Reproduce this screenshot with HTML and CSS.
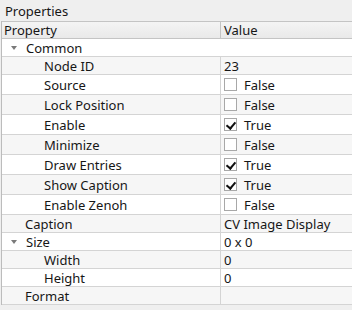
FILE: index.html
```html
<!DOCTYPE html>
<html lang="en">

<head>
    <meta charset="UTF-8">
    <title>Properties</title>
    <link rel="stylesheet" href="styles.css">
</head>

<body>
    <div class="panel">
        <div class="panel-title">Properties</div>
        <div class="browser">
            <div class="row header">
                <div class="cell name">Property</div>
                <div class="cell value">Value</div>
            </div>

            <div class="row group">
                <div class="cell name lvl0"><span class="arrow"></span>Common</div>
            </div>
            <div class="row alt">
                <div class="cell name lvl1">Node ID</div>
                <div class="cell value">23</div>
            </div>
            <div class="row check">
                <div class="cell name lvl1">Source</div>
                <div class="cell value"><span class="box"></span>False</div>
            </div>
            <div class="row check alt">
                <div class="cell name lvl1">Lock Position</div>
                <div class="cell value"><span class="box"></span>False</div>
            </div>
            <div class="row check">
                <div class="cell name lvl1">Enable</div>
                <div class="cell value"><span class="box on"></span>True</div>
            </div>
            <div class="row check alt">
                <div class="cell name lvl1">Minimize</div>
                <div class="cell value"><span class="box"></span>False</div>
            </div>
            <div class="row check">
                <div class="cell name lvl1">Draw Entries</div>
                <div class="cell value"><span class="box on"></span>True</div>
            </div>
            <div class="row check alt">
                <div class="cell name lvl1">Show Caption</div>
                <div class="cell value"><span class="box on"></span>True</div>
            </div>
            <div class="row check">
                <div class="cell name lvl1">Enable Zenoh</div>
                <div class="cell value"><span class="box"></span>False</div>
            </div>
            <div class="row alt">
                <div class="cell name lvl0 plain">Caption</div>
                <div class="cell value">CV Image Display</div>
            </div>
            <div class="row">
                <div class="cell name lvl0"><span class="arrow"></span>Size</div>
                <div class="cell value">0 x 0</div>
            </div>
            <div class="row alt">
                <div class="cell name lvl1">Width</div>
                <div class="cell value">0</div>
            </div>
            <div class="row">
                <div class="cell name lvl1">Height</div>
                <div class="cell value">0</div>
            </div>
            <div class="row alt">
                <div class="cell name lvl0 plain">Format</div>
                <div class="cell value"></div>
            </div>
        </div>
    </div>
</body>

</html>
```

FILE: styles.css
```css
* {
    margin: 0;
    padding: 0;
    box-sizing: border-box;
}

body {
    font-family: 'Noto Sans', sans-serif;
    font-size: 13px;
    color: #161616;
    background: #efefef;
    width: 352px;
    height: 310px;
    overflow: hidden;
}

.panel-title {
    height: 21px;
    line-height: 22px;
    padding-left: 5px;
}

.browser {
    margin-left: 1px;
    border-left: 1px solid #bcbcbc;
    background: #ffffff;
}

.row {
    display: grid;
    grid-template-columns: 218px 1fr;
    height: 18px;
    border-bottom: 1px solid #d4d4d4;
    background: #ffffff;
}

.row.check {
    height: 20px;
}

.row.alt {
    background: #f6f6f6;
}

.row.header {
    border-top: 1px solid #c4c4c4;
    border-bottom: 1px solid #c4c4c4;
    background: linear-gradient(#f4f4f4, #e9e9e9);
}

.cell {
    display: flex;
    align-items: center;
    white-space: nowrap;
    line-height: 16px;
}

.cell.name {
    padding-left: 2px;
}

.cell.value {
    border-left: 1px solid #d4d4d4;
    padding-left: 3px;
}

.header .cell.value {
    border-left-color: #c4c4c4;
}

.cell.lvl0 {
    padding-left: 7px;
}

.cell.lvl0.plain {
    padding-left: 23px;
}

.cell.lvl1 {
    padding-left: 42px;
}

.arrow {
    width: 0;
    height: 0;
    border-left: 3px solid transparent;
    border-right: 3px solid transparent;
    border-top: 4px solid #7a7a7a;
    margin-left: 2px;
    margin-right: 9px;
}

.box {
    width: 13px;
    height: 13px;
    border: 1px solid #a8a8a8;
    background: #ffffff;
    margin-right: 7px;
    position: relative;
}

.box.on::after {
    content: '';
    position: absolute;
    left: 3px;
    top: 1px;
    width: 4px;
    height: 7px;
    border-right: 2px solid #111111;
    border-bottom: 2px solid #111111;
    transform: rotate(40deg);
}
```
